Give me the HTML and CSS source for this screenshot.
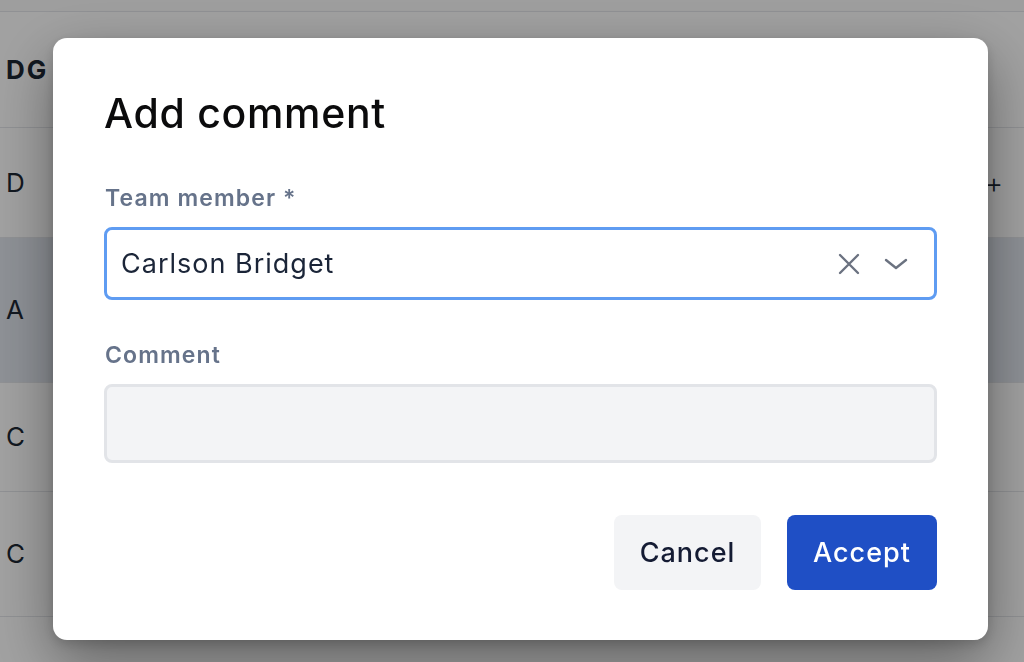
FILE: index.html
```html
<!DOCTYPE html>
<html lang="en">
<head>
<meta charset="utf-8">
<title>Add comment</title>
<link rel="stylesheet" href="styles.css">
</head>
<body>
<div class="page">
  <div class="topbar"></div>
  <div class="row head"><span class="cell">DG</span></div>
  <div class="row r1"><span class="cell">D</span><span class="plus">+</span></div>
  <div class="row r2 selected"><span class="cell">A</span></div>
  <div class="row r3"><span class="cell">C</span></div>
  <div class="row r4"><span class="cell">C</span></div>
  <div class="row r5"></div>
</div>

<div class="overlay">
  <div class="modal" role="dialog" aria-labelledby="dlg-title">
    <h1 class="title" id="dlg-title">Add comment</h1>
    <label class="label">Team member *</label>
    <div class="select">
      <span class="select-value">Carlson Bridget</span>
      <span class="select-icons">
        <svg class="icon" width="24" height="24" viewBox="0 0 24 24" fill="none" stroke="#6b7280" stroke-width="2.4" stroke-linecap="round"><path d="M3 3 L21 21 M21 3 L3 21"/></svg>
        <svg class="icon" width="24" height="24" viewBox="0 0 24 24" fill="none" stroke="#6b7280" stroke-width="2.4" stroke-linecap="round" stroke-linejoin="round"><path d="M2 8 L12 16 L22 8"/></svg>
      </span>
    </div>
    <label class="label second">Comment</label>
    <div class="textarea"></div>
    <div class="actions">
      <button class="btn cancel">Cancel</button>
      <button class="btn accept">Accept</button>
    </div>
  </div>
</div>
</body>
</html>
```

FILE: styles.css
```css
* { box-sizing: border-box; }
html, body { margin: 0; padding: 0; }
body {
  width: 1024px;
  height: 662px;
  overflow: hidden;
  background: #ffffff;
  font-family: Inter, "Liberation Sans", sans-serif;
}

.page {
  display: flex;
  flex-direction: column;
}
.topbar { height: 12px; border-bottom: 1px solid #e4e6ea; background: #fbfbfb; }
.row {
  display: flex;
  align-items: center;
  justify-content: space-between;
  border-bottom: 1px solid #e4e6ea;
  padding: 0 20px 0 6px;
  color: #1c2733;
  font-size: 26px;
  letter-spacing: 1px;
}
.cell { line-height: 1; }
.head { height: 116px; font-weight: 700; letter-spacing: 2px; }
.r1 { height: 110px; }
.r2 { height: 145px; }
.r3 { height: 109px; }
.r4 { height: 125px; }
.r5 { height: 60px; border-bottom: none; }
.selected { background: #e1e6ee; }
.plus { font-size: 28px; font-weight: 300; color: #1c2733; }

.overlay {
  position: fixed;
  inset: 0;
  background: rgba(0, 0, 0, 0.37);
  padding: 38px 0 0 53px;
}
.modal {
  width: 935px;
  height: 602px;
  background: #ffffff;
  border-radius: 14px;
  box-shadow: 0 22px 60px rgba(0, 0, 0, 0.4), 0 4px 12px rgba(0, 0, 0, 0.15);
  padding: 51px 51px 50px 51px;
  display: flex;
  flex-direction: column;
}
.title {
  margin: 0 0 47px 0;
  font-size: 41px;
  line-height: 48px;
  font-weight: 500;
  color: #0b0b0c;
  letter-spacing: 0.7px;
}
.label {
  display: block;
  margin: 0 0 15px 1px;
  font-size: 23px;
  line-height: 28px;
  font-weight: 600;
  color: #66738a;
  letter-spacing: 1.1px;
}
.label.second { margin-top: 41px; }
.select {
  height: 73px;
  border: 3px solid #5f9cf2;
  border-radius: 8px;
  display: flex;
  align-items: center;
  justify-content: space-between;
  padding: 0 26px 0 14px;
}
.select-value {
  font-size: 27px;
  color: #1b2538;
  letter-spacing: 1px;
}
.select-icons {
  display: flex;
  align-items: center;
  gap: 23px;
}
.icon { display: block; }
.textarea {
  height: 79px;
  background: #f3f4f6;
  border: 3px solid #e2e4e8;
  border-radius: 8px;
}
.actions {
  margin-top: 52px;
  display: flex;
  justify-content: flex-end;
  gap: 26px;
}
.btn {
  height: 75px;
  border: none;
  border-radius: 8px;
  font-family: Inter, "Liberation Sans", sans-serif;
  font-size: 27px;
  font-weight: 500;
  letter-spacing: 1px;
  padding: 0;
}
.cancel { width: 147px; background: #f3f4f6; color: #141b33; }
.accept { width: 150px; background: #1f4fc5; color: #ffffff; }
```
